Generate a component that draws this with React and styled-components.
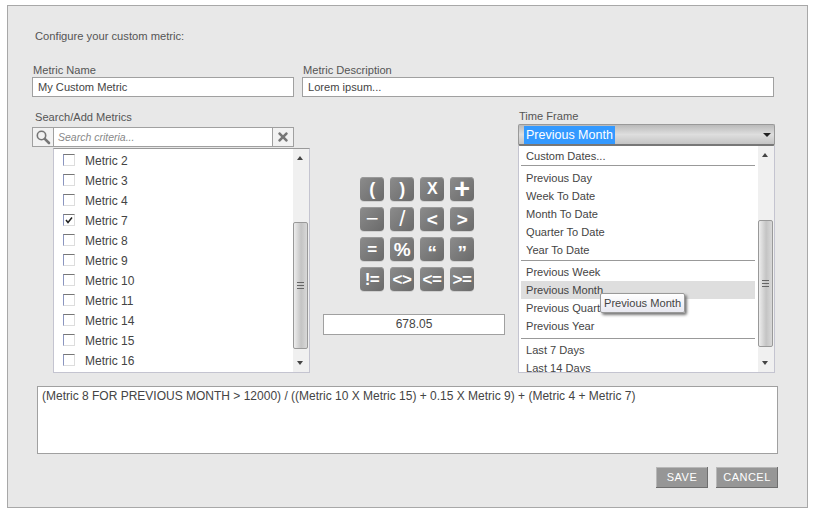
import React from 'react'
import styled, { createGlobalStyle } from 'styled-components'
import { FaTimes } from 'react-icons/fa'

const GlobalStyle = createGlobalStyle`
  html, body {
    margin: 0;
    padding: 0;
    background: #fff;
    font-family: "Liberation Sans", Arial, sans-serif;
  }
`

const metrics = [
  { name: 'Metric 2' },
  { name: 'Metric 3' },
  { name: 'Metric 4' },
  { name: 'Metric 7', checked: true },
  { name: 'Metric 8' },
  { name: 'Metric 9' },
  { name: 'Metric 10' },
  { name: 'Metric 11' },
  { name: 'Metric 14' },
  { name: 'Metric 15' },
  { name: 'Metric 16' },
]

const keys = [
  { label: '(', size: 18 },
  { label: ')', size: 18 },
  { label: 'X', size: 16 },
  { label: '+', size: 27 },
  { label: '−', size: 22, weight: 'normal' },
  { label: '/', size: 22, weight: 'normal' },
  { label: '<', size: 19 },
  { label: '>', size: 19 },
  { label: '=', size: 17 },
  { label: '%', size: 19 },
  { label: '“', size: 19, drop: 6 },
  { label: '”', size: 19, drop: 6 },
  { label: '!=', size: 17 },
  { label: '<>', size: 17 },
  { label: '<=', size: 17 },
  { label: '>=', size: 17 },
]

const timeGroups = [
  { pad: 0, gap: 3, items: ['Custom Dates...'] },
  { pad: 1, gap: 2, items: ['Previous Day', 'Week To Date', 'Month To Date', 'Quarter To Date', 'Year To Date'] },
  { pad: 3, gap: 2, items: ['Previous Week', 'Previous Month', 'Previous Quarter', 'Previous Year'] },
  { pad: 0, gap: 0, items: ['Last 7 Days', 'Last 14 Days'] },
]

const Scrollbar = ({ top, height }) => (
  <Track>
    <Arrow data-dir="up" />
    <Thumb $top={top} $height={height}>
      <Grip />
    </Thumb>
    <Arrow data-dir="down" />
  </Track>
)

const App = () => (
  <>
    <GlobalStyle />
    <Page>
      <Panel>
        <Title>Configure your custom metric:</Title>
        <NameRow>
          <Field>
            <FieldLabel>Metric Name</FieldLabel>
            <TextBox>My Custom Metric</TextBox>
          </Field>
          <Field>
            <FieldLabel>Metric Description</FieldLabel>
            <TextBox>Lorem ipsum...</TextBox>
          </Field>
        </NameRow>

        <Columns>
          <LeftColumn>
            <SearchLabel>Search/Add Metrics</SearchLabel>
            <SearchBox>
              <SearchIcon>
                <svg width="16" height="16" viewBox="0 0 16 16">
                  <circle cx="6.5" cy="6.5" r="4.2" fill="none" stroke="#777" strokeWidth="1.6" />
                  <path d="M9.8 9.8 L14 14" stroke="#777" strokeWidth="2.6" strokeLinecap="round" />
                </svg>
              </SearchIcon>
              <SearchText>Search criteria...</SearchText>
              <ClearIcon>
                <FaTimes size={14} color="#777" />
              </ClearIcon>
            </SearchBox>
            <MetricList>
              <MetricRows>
                {metrics.map((m) => (
                  <MetricRow key={m.name}>
                    <CheckBox>
                      {m.checked && (
                        <svg width="10" height="10" viewBox="0 0 10 10">
                          <path d="M2 5 L4 7.5 L8 2.5" fill="none" stroke="#222" strokeWidth="1.5" />
                        </svg>
                      )}
                    </CheckBox>
                    {m.name}
                  </MetricRow>
                ))}
              </MetricRows>
              <Scrollbar top={73} height={127} />
            </MetricList>
          </LeftColumn>

          <CenterColumn>
            <Keypad>
              {keys.map((k) => (
                <Key key={k.label} $size={k.size} $weight={k.weight} $drop={k.drop}>
                  {k.label}
                </Key>
              ))}
            </Keypad>
            <ResultBox>678.05</ResultBox>
          </CenterColumn>

          <RightColumn>
            <TimeLabel>Time Frame</TimeLabel>
            <SelectBox>
              <Selected>Previous Month</Selected>
              <Caret />
            </SelectBox>
            <TimeList>
              <TimeRows>
                {timeGroups.map((group, i) => (
                  <TimeGroup key={i} $pad={group.pad} $gap={group.gap}>
                    {group.items.map((item) => (
                      <TimeRow key={item} $hover={item === 'Previous Month'}>
                        {item}
                      </TimeRow>
                    ))}
                  </TimeGroup>
                ))}
              </TimeRows>
              <Scrollbar top={74} height={127} />
              <Tip>Previous Month</Tip>
            </TimeList>
          </RightColumn>
        </Columns>

        <Formula>
          (Metric 8 FOR PREVIOUS MONTH &gt; 12000) / ((Metric 10 X Metric 15) + 0.15 X Metric 9) + (Metric 4 + Metric 7)
        </Formula>

        <Actions>
          <ActionButton $width={52}>SAVE</ActionButton>
          <ActionButton $width={62}>CANCEL</ActionButton>
        </Actions>
      </Panel>
    </Page>
  </>
)

const Page = styled.div`
  width: 815px;
  height: 514px;
  padding: 5px 7px;
  box-sizing: border-box;
  overflow: hidden;
`

const Panel = styled.div`
  width: 801px;
  height: 503px;
  box-sizing: border-box;
  background: #e8e8e8;
  border: 1px solid #a8a8a8;
  padding: 23px 0 0 24px;
  font-size: 11.1px;
  color: #555;
`

const Title = styled.div`
  height: 14px;
  line-height: 14px;
  font-size: 11.2px;
  margin-left: 3px;
`

const NameRow = styled.div`
  display: grid;
  grid-template-columns: 262px 472px;
  column-gap: 8px;
  margin-top: 20px;
`

const Field = styled.div`
  display: flex;
  flex-direction: column;
`

const FieldLabel = styled.div`
  height: 14px;
  line-height: 14px;
  margin-left: 1px;
`

const TextBox = styled.div`
  height: 20px;
  line-height: 18px;
  box-sizing: border-box;
  background: #fff;
  border: 1px solid #a0a0a0;
  padding-left: 5px;
  color: #444;
`

const Columns = styled.div`
  display: grid;
  grid-template-columns: 278px 182px 257px;
  column-gap: 13px;
  margin-top: 12px;
`

const LeftColumn = styled.div`
  display: flex;
  flex-direction: column;
`

const SearchLabel = styled.div`
  height: 18px;
  line-height: 16px;
  margin-left: 3px;
`

const SearchBox = styled.div`
  display: flex;
  align-items: stretch;
  width: 262px;
  height: 20px;
  box-sizing: border-box;
  background: #fff;
  border: 1px solid #a0a0a0;
`

const SearchIcon = styled.div`
  width: 20px;
  display: flex;
  align-items: center;
  justify-content: center;
  background: #f2f2f2;
  border-right: 1px solid #a0a0a0;
`

const SearchText = styled.div`
  flex: 1;
  line-height: 19px;
  padding-left: 4px;
  font-size: 10.5px;
  font-style: italic;
  color: #888;
`

const ClearIcon = styled.div`
  width: 20px;
  display: flex;
  align-items: center;
  justify-content: center;
  background: #f2f2f2;
  border-left: 1px solid #a0a0a0;
`

const MetricList = styled.div`
  display: flex;
  width: 257px;
  height: 225px;
  margin: 1px 0 0 21px;
  box-sizing: border-box;
  background: #fff;
  border: 1px solid #c4c4d0;
  border-top: 1px solid #999;
  overflow: hidden;
`

const MetricRows = styled.div`
  flex: 1;
  padding-top: 2px;
`

const MetricRow = styled.div`
  display: flex;
  align-items: center;
  height: 20px;
  padding-left: 9px;
  font-size: 12px;
  color: #444;
`

const CheckBox = styled.span`
  display: flex;
  align-items: center;
  justify-content: center;
  width: 12px;
  height: 12px;
  margin: 0 10px 2px 0;
  box-sizing: border-box;
  border: 1px solid #ddd;
  border-top-color: #777;
  border-left-color: #8a94c0;
  background: #fff;
`

const Track = styled.div`
  position: relative;
  flex: none;
  width: 16px;
  background: #f0f0f0;
`

const Arrow = styled.span`
  position: absolute;
  left: 4px;
  width: 0;
  height: 0;
  border-left: 3.5px solid transparent;
  border-right: 3.5px solid transparent;
  &[data-dir='up'] {
    top: 7px;
    border-bottom: 4px solid #444;
  }
  &[data-dir='down'] {
    bottom: 7px;
    border-top: 4px solid #444;
  }
`

const Thumb = styled.div`
  position: absolute;
  left: 0;
  top: ${(p) => p.$top}px;
  width: 15px;
  height: ${(p) => p.$height}px;
  box-sizing: border-box;
  border: 1px solid #999;
  border-radius: 2px;
  background: linear-gradient(to right, #ededed, #c4c4c4 55%, #d8d8d8);
  display: flex;
  align-items: center;
  justify-content: center;
`

const Grip = styled.span`
  width: 7px;
  height: 7px;
  background: repeating-linear-gradient(to bottom, #666 0 1px, transparent 1px 3px);
`

const CenterColumn = styled.div`
  display: flex;
  flex-direction: column;
  align-items: center;
  padding-top: 68px;
`

const Keypad = styled.div`
  display: grid;
  grid-template-columns: repeat(4, 24px);
  grid-auto-rows: 24px;
  gap: 6px;
  margin-left: 6px;
`

const Key = styled.div`
  display: flex;
  align-items: center;
  justify-content: center;
  border-radius: 4px;
  background: linear-gradient(135deg, #8c8c8c, #6a6a6a);
  box-shadow: inset 0 1px 0 #9a9a9a, 0 1px 0 #cfcfcf;
  color: #fff;
  font-size: ${(p) => p.$size}px;
  font-weight: ${(p) => p.$weight || 'bold'};
  line-height: 1;
  letter-spacing: -0.5px;
  padding-top: ${(p) => p.$drop || 0}px;
  box-sizing: border-box;
`

const ResultBox = styled.div`
  align-self: stretch;
  height: 21px;
  margin-top: 23px;
  line-height: 19px;
  box-sizing: border-box;
  background: #fff;
  border: 1px solid #a0a0a0;
  text-align: center;
  font-size: 12px;
  color: #444;
`

const RightColumn = styled.div`
  display: flex;
  flex-direction: column;
`

const TimeLabel = styled.div`
  height: 15px;
  line-height: 14px;
  margin-left: 1px;
`

const SelectBox = styled.div`
  position: relative;
  display: flex;
  align-items: center;
  height: 22px;
  box-sizing: border-box;
  padding-left: 5px;
  border: 1px solid #999;
  border-bottom: 2px solid #777;
  border-radius: 2px;
  background: linear-gradient(to bottom, #bababa, #dedede 50%, #c4c4c4);
`

const Selected = styled.span`
  background: #3399ff;
  color: #fff;
  padding: 0 2px;
  line-height: 18px;
  font-size: 12.5px;
`

const Caret = styled.span`
  position: absolute;
  right: 3px;
  top: 8px;
  width: 0;
  height: 0;
  border-left: 4px solid transparent;
  border-right: 4px solid transparent;
  border-top: 4px solid #222;
`

const TimeList = styled.div`
  position: relative;
  display: flex;
  height: 227px;
  box-sizing: border-box;
  background: #fff;
  border: 1px solid #c4c4d0;
  border-top: 0;
  overflow: hidden;
`

const TimeRows = styled.div`
  flex: 1;
  padding: 1px 3px 0 2px;
`

const TimeGroup = styled.div`
  padding-bottom: ${(p) => p.$pad}px;
  margin-bottom: ${(p) => p.$gap}px;
  border-bottom: 1px solid #999;
  &:last-child {
    border-bottom: 0;
  }
`

const TimeRow = styled.div`
  height: 18px;
  line-height: 18px;
  padding-left: 5px;
  color: #444;
  background: ${(p) => (p.$hover ? '#dedede' : 'transparent')};
`

const Tip = styled.div`
  position: absolute;
  left: 81px;
  top: 147px;
  height: 20px;
  line-height: 19px;
  padding: 0 3px;
  box-sizing: border-box;
  background: linear-gradient(to bottom, #fff, #e8e8f0);
  border: 1px solid #999;
  border-radius: 2px;
  box-shadow: 2px 2px 3px #777;
  color: #444;
`

const Formula = styled.div`
  width: 741px;
  height: 68px;
  margin: 13px 0 0 5px;
  padding: 2px 4px;
  box-sizing: border-box;
  background: #fff;
  border: 1px solid #a0a0a0;
  font-size: 12px;
  line-height: 15px;
  color: #444;
`

const Actions = styled.div`
  display: flex;
  justify-content: flex-end;
  gap: 8px;
  width: 746px;
  margin-top: 13px;
`

const ActionButton = styled.div`
  width: ${(p) => p.$width}px;
  height: 21px;
  line-height: 21px;
  box-sizing: border-box;
  text-align: center;
  background: #969696;
  color: #fff;
  font-size: 11px;
  letter-spacing: 0.5px;
  box-shadow: inset -1px -1px 0 #6e6e6e, inset 1px 1px 0 #b8b8b8;
`

export default App
